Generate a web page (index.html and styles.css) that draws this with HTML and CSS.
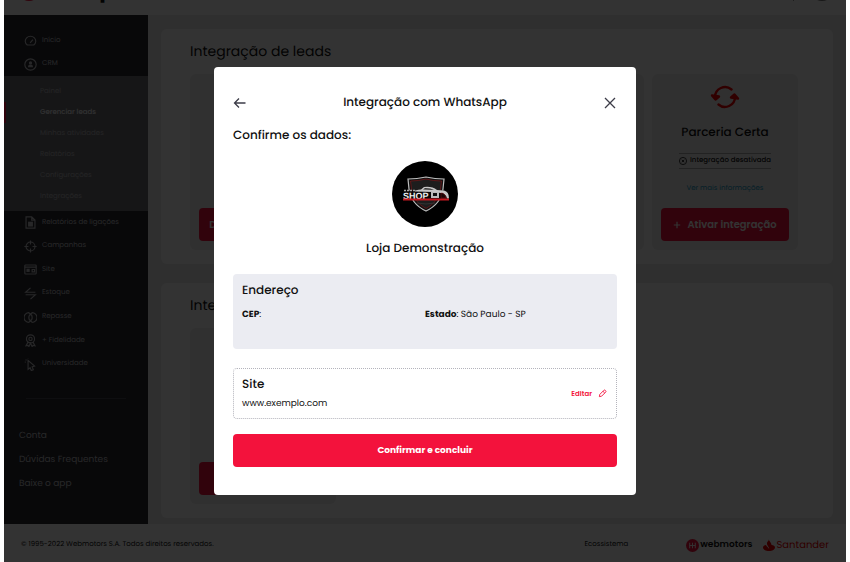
FILE: index.html
```html
<!DOCTYPE html>
<html lang="pt-BR">
<head>
<meta charset="utf-8">
<meta name="viewport" content="width=device-width, initial-scale=1">
<title>Integração com WhatsApp</title>
<link rel="stylesheet" href="styles.css">
</head>
<body>
<div class="page">
  <header class="topbar">
    <span class="brand-mark"></span>
    <span class="brand-name">cockpit</span>
    <span class="topbar-line"></span>
    <span class="avatar"></span>
  </header>
  <div class="body">
    <nav class="sidebar">
      <ul class="menu menu-top">
        <li><a href="#"><svg viewBox="0 0 16 16"><path d="M4 13.500a6.500 6 0 1 1 8 0zM7.500 11l3.500-4"/></svg>Início</a></li>
        <li><a href="#"><svg viewBox="0 0 16 16"><circle cx="8" cy="8" r="7"/><circle class="solid" cx="8" cy="6" r="2"/><path class="solid" d="M5 11.500V10a3 2 0 0 1 6 0v1.500z"/></svg>CRM</a></li>
      </ul>
      <ul class="submenu">
        <li><a href="#">Painel</a></li>
        <li class="current"><a href="#">Gerenciar leads</a></li>
        <li><a href="#">Minhas atividades</a></li>
        <li><a href="#">Relatórios</a></li>
        <li><a href="#">Configurações</a></li>
        <li><a href="#">Integrações</a></li>
      </ul>
      <ul class="menu menu-main">
        <li><a href="#"><svg viewBox="0 0 16 16"><path d="M2.500 1h7l4 4v10h-11zM9.500 1v4h4"/><path class="solid" d="M5 7h6v6H5z"/></svg>Relatórios de ligações</a></li>
        <li><a href="#"><svg viewBox="0 0 16 16"><circle cx="8" cy="8" r="5.500"/><path d="M8 .5v5M8 10.500v5M.5 8h5M10.500 8h5"/></svg>Campanhas</a></li>
        <li><a href="#"><svg viewBox="0 0 16 16"><rect x="1" y="2.500" width="14" height="11" rx="1"/><path d="M1 5h14M10 8h3v3h-3z"/><path class="solid" d="M3 7h4v4H3z"/></svg>Site</a></li>
        <li><a href="#"><svg viewBox="0 0 16 16"><path d="M14 6.500H2L8 1M2 9.500h12L8 15"/></svg>Estoque</a></li>
        <li><a href="#"><svg viewBox="0 0 16 16"><path d="M6 2a6 6 0 0 0 0 12M10 2a6 6 0 0 1 0 12M6 2l2 2 2-2M6 14l2-2 2 2"/><ellipse cx="8" cy="8" rx="2" ry="3.500"/></svg>Repasse</a></li>
        <li><a href="#"><svg viewBox="0 0 16 16"><circle cx="8" cy="6" r="5"/><circle cx="8" cy="6" r="2"/><path d="M5 10l-2.500 4.500 2.500-.5 1 1.500 2-4 2 4 1-1.500 2.500.5L11 10"/></svg>+ Fidelidade</a></li>
        <li><a href="#"><svg viewBox="0 0 16 16"><path d="M5 3l8 7-3 1 1.500 3.500-2.500 1L7.500 12 5 14zM2 2l1 1M5 .5V1M1 5h1"/></svg>Universidade</a></li>
      </ul>
      <hr class="rule">
      <ul class="links">
        <li><a href="#">Conta</a></li>
        <li><a href="#">Dúvidas Frequentes</a></li>
        <li><a href="#">Baixe o app</a></li>
      </ul>
    </nav>
    <main class="content">
      <section class="panel">
        <h1>Integração de leads</h1>
        <div class="cards">
          <article class="card"><button class="btn" type="button">Desativar integração</button></article>
          <article class="card"></article>
          <article class="card"></article>
          <article class="card">
            <svg class="sync" viewBox="0 0 30 24"><path d="M5 12A10 10 0 0 1 21.500 4.500M25 12A10 10 0 0 1 8.500 19.500"/><path class="sync-head" d="M2 10.500l3.500 4 3.500-3zM28 13.500l-3.500-4-3.500 3z"/></svg>
            <h2>Parceria Certa</h2>
            <p class="status"><svg viewBox="0 0 10 10"><circle cx="5" cy="5" r="4.500"/><path d="M3.500 3.500l3 3M6.500 3.500l-3 3"/></svg>Integração desativada</p>
            <a class="more" href="#">Ver mais informações</a>
            <button class="btn" type="button"><svg viewBox="0 0 10 10"><path d="M5 1v8M1 5h8"/></svg>Ativar integração</button>
          </article>
        </div>
      </section>
      <section class="panel">
        <h1>Integrações</h1>
        <div class="cards">
          <article class="card"><button class="btn" type="button"><svg viewBox="0 0 10 10"><path d="M5 1v8M1 5h8"/></svg>Ativar</button></article>
        </div>
      </section>
    </main>
  </div>
  <footer class="footer">
    <span class="copyright">© 1995-2022 Webmotors S.A. Todos direitos reservados.</span>
    <span class="eco">Ecossistema</span>
    <span class="webmotors"><svg viewBox="0 0 14 14"><circle cx="7" cy="7" r="7"/><path d="M4 4v6M7 4v6M10 4v6M4 7h6"/></svg>webmotors</span>
    <span class="santander"><svg viewBox="0 0 12 12"><path d="M6 0c-.5 2 2.500 3.500 2.500 6 2 .3 3.500 1.200 3.500 2.500C12 10.400 9.300 12 6 12S0 10.400 0 8.500C0 7.200 1.500 6.300 3 6c0 1.500 3 2.500 3 4 1-1.500-2.500-3.500-2-6C4 2.500 6 2 6 0z"/></svg>Santander</span>
  </footer>
</div>

<div class="overlay">
  <div class="modal" role="dialog" aria-modal="true" aria-labelledby="modal-title">
    <div class="modal-head">
      <button class="icon-btn" type="button" aria-label="Voltar"><svg viewBox="0 0 14 14"><path d="M12.500 7H1.500M6 2.500L1.500 7 6 11.500"/></svg></button>
      <h2 id="modal-title">Integração com WhatsApp</h2>
      <button class="icon-btn" type="button" aria-label="Fechar"><svg viewBox="0 0 14 14"><path d="M2 2l10 10M12 2L2 12"/></svg></button>
    </div>
    <p class="lead">Confirme os dados:</p>
    <svg class="store-logo" viewBox="0 0 66 66" role="img" aria-label="Shop">
      <circle cx="33" cy="33" r="33" fill="#000"/>
      <path d="M16 18q9 0 18-2 9 2 18 2l-1 10q-2 15-17 22-15-7-17-22z" fill="#111" stroke="#bdbdbd" stroke-width="1.200"/>
      <path d="M18.500 20q8 0 15.500-2 7 2 15.500 2l-1 8q-2 13-14.500 19.500Q21.500 41 19.500 28z" fill="#1d1d1d" stroke="#8a1518" stroke-width=".6"/>
      <path d="M11 29.500h46v9H11z" fill="#080606"/>
      <path d="M23 29.500q4-1 6-1l3-2.500q8-1 13 3l7 .5q5 1 5 8h-2q-1-5-6-5.500l-8-1q-9-.5-18-.5z" fill="#c6c6c6"/>
      <path d="M31 28.500l2-1.500q6 0 9 2z" fill="#333"/>
      <path d="M39 31h8v6h-8z" fill="#bcbcbc"/>
      <path d="M41 32h4v3h-4z" fill="#111"/>
      <path d="M49 32q4 0 5 5h-5z" fill="#180606" stroke="#801317" stroke-width=".5"/>
      <path d="M12 29.500h12" stroke="#aaa" stroke-width="1.500" stroke-dasharray="2 1"/>
      <text x="11" y="37.500" class="store-logo-text">SHOP</text>
      <path d="M11 37.500h46v2H11z" fill="#c51820"/>
      <path d="M25 42q9 2 18 0" fill="none" stroke="#333" stroke-width="1"/>
    </svg>
    <p class="store-name">Loja Demonstração</p>
    <section class="address">
      <h3>Endereço</h3>
      <div class="address-grid">
        <span><b>CEP</b>:</span>
        <span><b>Estado</b>: São Paulo - SP</span>
      </div>
    </section>
    <section class="site">
      <div>
        <h3>Site</h3>
        <p>www.exemplo.com</p>
      </div>
      <button class="edit" type="button">Editar<svg viewBox="0 0 10 10"><path d="M1.500 8.500l.5-2.500L6.500 1.500q.8-.8 1.600 0l.4.4q.8.8 0 1.600L4 8zM5.500 2.500l2 2"/></svg></button>
    </section>
    <button class="confirm" type="button">Confirmar e concluir</button>
  </div>
</div>
</body>
</html>
```
FILE: styles.css
```css
* { box-sizing: border-box; }

body {
  margin: 0;
  background: #fff;
  color: #111;
  font-family: Poppins, Inter, "Open Sans", sans-serif;
  font-size: 9px;
  text-rendering: geometricPrecision;
}

h1, h2, h3, p, ul { margin: 0; padding: 0; }
h1, ul { font-weight: 400; }
h2, h3, p { font-weight: 500; }
ul { list-style: none; }
a { color: inherit; text-decoration: none; }
button { border: 0; padding: 0; background: none; font: inherit; color: inherit; cursor: pointer; }
svg { flex: none; fill: none; stroke: currentColor; }

.page {
  display: flex;
  flex-direction: column;
  min-height: 100vh;
  margin: 0 4px;
  overflow: hidden;
}

.topbar {
  display: flex;
  align-items: flex-end;
  height: 15px;
  padding: 0 14px 14px 14px;
}
.brand-mark { flex: none; width: 22px; height: 22px; border-radius: 50%; background: #f3123c; }
.brand-name { margin-left: 5px; font-size: 22px; font-weight: 700; line-height: 22px; }
.topbar-line { flex: none; width: 1px; height: 20px; margin-left: auto; background: #999; }
.avatar { flex: none; width: 24px; height: 24px; margin: 0 -2px 0 16px; border-radius: 50%; background: #777; }

.body { display: flex; flex: 1; }

.sidebar { width: 144px; flex: none; background: #28282f; color: #c4c4c8; }
.menu { display: grid; grid-auto-rows: 1fr; padding-left: 20px; }
.menu-top { height: 61px; padding-top: 14px; }
.menu-main { height: 165px; }
.menu a { display: flex; align-items: center; gap: 5px; height: 100%; font-size: 7px; white-space: nowrap; }
.menu svg { width: 13px; height: 13px; stroke-width: 1.4; }
.menu .solid { fill: currentColor; stroke: none; }

.submenu { padding: 5px 0 4px; background: #717176; color: #b4b4b8; font-size: 7px; line-height: 21px; }
.submenu li { padding-left: 36px; }
.submenu .current { color: #f4f4f6; font-weight: 500; box-shadow: inset 2px 0 #f3123c; }

.rule { height: 1px; margin: 22px 22px 25px; border: 0; background: #484850; }
.links { padding-left: 15px; font-size: 9px; line-height: 24px; }

.content { flex: 1; display: flex; flex-direction: column; gap: 19px; padding: 14px 13px 6px; background: #ebebeb; }
.panel { padding: 12px 28px 14px 29px; border-radius: 6px; background: #fff; }
.panel h1 { margin-bottom: 13px; font-size: 14px; line-height: 20px; }
.cards { display: grid; grid-template-columns: repeat(4, 146px); gap: 8px; }
.card {
  display: flex;
  flex-direction: column;
  align-items: center;
  min-height: 176px;
  padding: 11px 9px 9px;
  border-radius: 6px;
  background: #f0f0f0;
}
.card h2 { margin-top: 13px; font-size: 12px; line-height: 22px; }
.sync { width: 30px; height: 24px; color: #f00000; stroke-width: 2.4; stroke-linecap: round; stroke-linejoin: round; }
.sync-head { fill: currentColor; }
.status {
  display: flex;
  align-items: center;
  gap: 3px;
  margin-top: 9px;
  border: solid #aaa;
  border-width: 1px 0;
  font-size: 7px;
  line-height: 14px;
  white-space: nowrap;
}
.status svg { width: 8px; height: 8px; }
.more { margin-top: 13px; color: #209ac4; font-size: 7px; line-height: 14px; }
.btn {
  display: flex;
  align-items: center;
  justify-content: center;
  gap: 6px;
  width: 100%;
  height: 33px;
  margin-top: auto;
  border-radius: 4px;
  background: #f3123c;
  color: #fff;
  font-size: 10px;
  font-weight: 600;
  white-space: nowrap;
}
.btn svg { width: 8px; height: 8px; stroke-width: 1.5; }

.footer { display: flex; align-items: center; height: 38px; padding: 4px 17px 0; font-size: 7px; }
.eco { margin: 0 58px 0 auto; }
.webmotors, .santander { display: flex; align-items: center; gap: 1px; }
.webmotors { font-size: 9px; font-weight: 600; }
.webmotors svg { width: 13px; height: 13px; }
.webmotors circle { fill: #f3123c; stroke: none; }
.webmotors path { stroke: #fff; }
.santander { margin-left: 11px; color: #ec0000; font-size: 10px; }
.santander svg { width: 12px; height: 12px; fill: currentColor; stroke: none; }

.overlay {
  position: fixed;
  inset: 0 4px;
  display: flex;
  align-items: center;
  justify-content: center;
  background: rgba(0, 0, 0, .8);
}
.modal {
  display: flex;
  flex-direction: column;
  width: 100%;
  max-width: 422px;
  padding: 26px 19px 28px;
  border-radius: 4px;
  background: #fff;
}
.modal-head { display: flex; align-items: center; justify-content: space-between; height: 20px; }
.modal-head h2 { font-size: 12px; line-height: 20px; }
.icon-btn { display: flex; color: #3c3c48; }
.icon-btn svg { width: 14px; height: 14px; stroke-width: 1.3; }
.lead { margin-top: 13px; font-size: 12px; line-height: 20px; }
.store-logo { align-self: center; width: 66px; height: 66px; margin-top: 15px; stroke: none; }
.store-logo-text { fill: #eee; font: 700 9px "Liberation Sans", sans-serif; }
.store-name { margin-top: 12px; font-size: 12px; line-height: 20px; text-align: center; }
.modal h3 { font-size: 12px; line-height: 20px; }

.address { min-height: 75px; margin-top: 15px; padding: 7px 9px; border-radius: 4px; background: #ebecf2; }
.address-grid { display: grid; grid-template-columns: 1fr 1fr; margin-top: 5px; line-height: 18px; }

.site {
  display: flex;
  align-items: center;
  justify-content: space-between;
  height: 51px;
  margin-top: 19px;
  padding: 0 9px 0 8px;
  border: 1px dotted #b4b4bc;
  border-radius: 4px;
}
.site p { font-weight: 400; line-height: 18px; }
.edit { display: flex; align-items: center; gap: 6px; color: #f3123c; font-size: 7px; font-weight: 600; }
.edit svg { width: 9px; height: 9px; }

.confirm { height: 33px; margin-top: 15px; border-radius: 4px; background: #f3123c; color: #fff; font-weight: 700; }
```
